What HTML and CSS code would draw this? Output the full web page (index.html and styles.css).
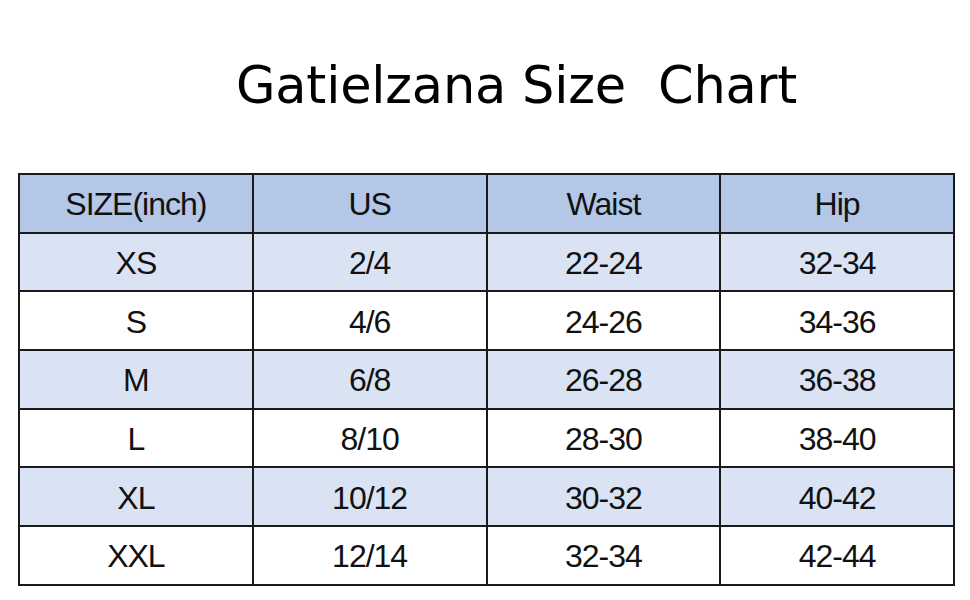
FILE: index.html
```html
<!DOCTYPE html>
<html lang="en">

<head>
    <meta charset="UTF-8">
    <meta name="viewport" content="width=device-width, initial-scale=1.0">
    <title>Gatielzana Size Chart</title>
    <link rel="stylesheet" href="styles.css">
</head>

<body>
    <h1 class="title">Gatielzana Size&nbsp; Chart</h1>

    <table class="chart">
        <thead>
            <tr>
                <th>SIZE(inch)</th>
                <th>US</th>
                <th>Waist</th>
                <th>Hip</th>
            </tr>
        </thead>
        <tbody>
            <tr class="alt">
                <td>XS</td>
                <td>2/4</td>
                <td>22-24</td>
                <td>32-34</td>
            </tr>
            <tr>
                <td>S</td>
                <td>4/6</td>
                <td>24-26</td>
                <td>34-36</td>
            </tr>
            <tr class="alt">
                <td>M</td>
                <td>6/8</td>
                <td>26-28</td>
                <td>36-38</td>
            </tr>
            <tr>
                <td>L</td>
                <td>8/10</td>
                <td>28-30</td>
                <td>38-40</td>
            </tr>
            <tr class="alt">
                <td>XL</td>
                <td>10/12</td>
                <td>30-32</td>
                <td>40-42</td>
            </tr>
            <tr>
                <td>XXL</td>
                <td>12/14</td>
                <td>32-34</td>
                <td>42-44</td>
            </tr>
        </tbody>
    </table>
</body>

</html>
```

FILE: styles.css
```css
body {
    margin: 0;
    background: #ffffff;
    font-family: "Liberation Sans", Arial, sans-serif;
    color: #111;
}

.title {
    margin: 0;
    padding: 50px 0 0 236px;
    height: 121px;
    box-sizing: border-box;
    font-family: "DejaVu Sans", sans-serif;
    font-weight: normal;
    font-size: 51px;
    line-height: 72px;
    letter-spacing: -0.2px;
    color: #000;
}

.chart {
    margin: 52px 0 0 18px;
    width: 937px;
    border-collapse: collapse;
    table-layout: fixed;
}

.chart th,
.chart td {
    border: 2px solid #1a1a1a;
    height: 58.7px;
    padding: 3px 0 0;
    box-sizing: border-box;
    text-align: center;
    vertical-align: middle;
    font-size: 32px;
    font-weight: normal;
    letter-spacing: -1px;
}

.chart th {
    background-color: #b4c7e7;
}

.chart .alt td {
    background-color: #dae3f3;
}
```
